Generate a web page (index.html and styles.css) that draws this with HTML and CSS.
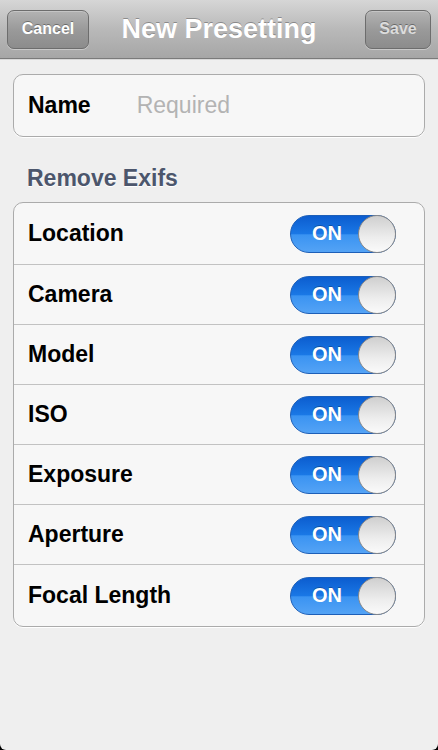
FILE: index.html
```html
<!DOCTYPE html>
<html>
<head>
<meta charset="utf-8">
<link rel="stylesheet" href="styles.css">
</head>
<body>
<div class="page">
  <header class="navbar">
    <button class="nav-btn cancel">Cancel</button>
    <h1 class="title">New Presetting</h1>
    <button class="nav-btn save">Save</button>
  </header>
  <main class="content">
    <div class="card name-card">
      <span class="label">Name</span>
      <span class="placeholder">Required</span>
    </div>
    <h2 class="section">Remove Exifs</h2>
    <div class="card list">
      <div class="row"><span class="label">Location</span><span class="toggle"><span class="on">ON</span><span class="knob"></span></span></div>
      <div class="row"><span class="label">Camera</span><span class="toggle"><span class="on">ON</span><span class="knob"></span></span></div>
      <div class="row"><span class="label">Model</span><span class="toggle"><span class="on">ON</span><span class="knob"></span></span></div>
      <div class="row"><span class="label">ISO</span><span class="toggle"><span class="on">ON</span><span class="knob"></span></span></div>
      <div class="row"><span class="label">Exposure</span><span class="toggle"><span class="on">ON</span><span class="knob"></span></span></div>
      <div class="row"><span class="label">Aperture</span><span class="toggle"><span class="on">ON</span><span class="knob"></span></span></div>
      <div class="row"><span class="label">Focal Length</span><span class="toggle"><span class="on">ON</span><span class="knob"></span></span></div>
    </div>
  </main>
</div>
</body>
</html>
```
FILE: styles.css
```css
html { background: #000; }
body {
  margin: 0;
  font-family: "Liberation Sans", Arial, sans-serif;
}
.page {
  width: 438px;
  height: 750px;
  background: #efefef;
  border-radius: 0 0 6px 6px;
  overflow: hidden;
}
.navbar {
  height: 59px;
  box-sizing: border-box;
  display: flex;
  align-items: center;
  justify-content: space-between;
  padding: 0 7px 0 7px;
  background: linear-gradient(#d6d6d6, #b9b9b9 50%, #a6a6a6);
  border-bottom: 1px solid #7a7a7a;
  box-shadow: 0 1px 0 #d9d9d9;
  position: relative;
}
.nav-btn {
  height: 39px;
  margin-top: 0;
  border: 1px solid #6d6d6d;
  border-radius: 7px;
  background: linear-gradient(#b3b3b3, #9a9a9a 50%, #8c8c8c);
  box-shadow: inset 0 1px 0 rgba(255,255,255,0.25), 0 1px 0 rgba(255,255,255,0.35);
  font-family: "Liberation Sans", Arial, sans-serif;
  font-weight: bold;
  font-size: 16px;
  color: #fff;
  text-shadow: 0 -1px 0 rgba(0,0,0,0.35);
  padding: 0;
}
.cancel { width: 82px; }
.save { width: 66px; color: #dcdcdc; }
.title {
  margin: 0;
  font-size: 27px;
  font-weight: bold;
  color: #fff;
  text-shadow: 0 -1px 0 rgba(0,0,0,0.3);
  position: absolute;
  left: 0;
  right: 0;
  text-align: center;
  pointer-events: none;
  top: 13px;
  line-height: 32px;
}
.content {
  padding: 15px 13px 0 13px;
}
.card {
  background: #f7f7f7;
  border: 1px solid #ababab;
  border-radius: 10px;
  box-shadow: 0 1px 0 #fff;
}
.name-card {
  height: 61px;
  display: flex;
  align-items: center;
  padding-left: 14px;
  font-size: 23px;
}
.label {
  font-weight: bold;
  font-size: 23px;
  color: #000;
}
.placeholder {
  margin-left: 46px;
  color: #b3b3b3;
  font-size: 23px;
}
.section {
  margin: 27px 0 0 14px;
  height: 38px;
  font-size: 23px;
  line-height: 28px;
  font-weight: bold;
  color: #4c566c;
  text-shadow: 0 1px 0 #fff;
}
.list {
  margin-top: 0;
}
.row {
  height: 59px;
  display: flex;
  align-items: center;
  justify-content: space-between;
  padding: 0 28px 0 14px;
  border-top: 1px solid #c2c2c2;
}
.row:first-child {
  border-top: none;
  height: 61px;
}
.row:last-child { height: 61px; }
.toggle {
  width: 106px;
  height: 38px;
  box-sizing: border-box;
  border-radius: 19px;
  border: 1px solid #1d5fb8;
  background: linear-gradient(#0c5dcf, #1a78e6 50%, #3a93f2 52%, #54a3f5);
  display: flex;
  align-items: center;
  justify-content: space-between;
  position: relative;
}
.on {
  color: #fff;
  font-weight: bold;
  font-size: 20px;
  margin-left: 21px;
  text-shadow: 0 -1px 0 rgba(0,0,0,0.25);
}
.knob {
  width: 38px;
  height: 38px;
  box-sizing: border-box;
  border-radius: 50%;
  margin-right: -1px;
  border: 1px solid #8a8a8a;
  background: linear-gradient(#cfcfcf, #ededed 60%, #fafafa);
}
```
